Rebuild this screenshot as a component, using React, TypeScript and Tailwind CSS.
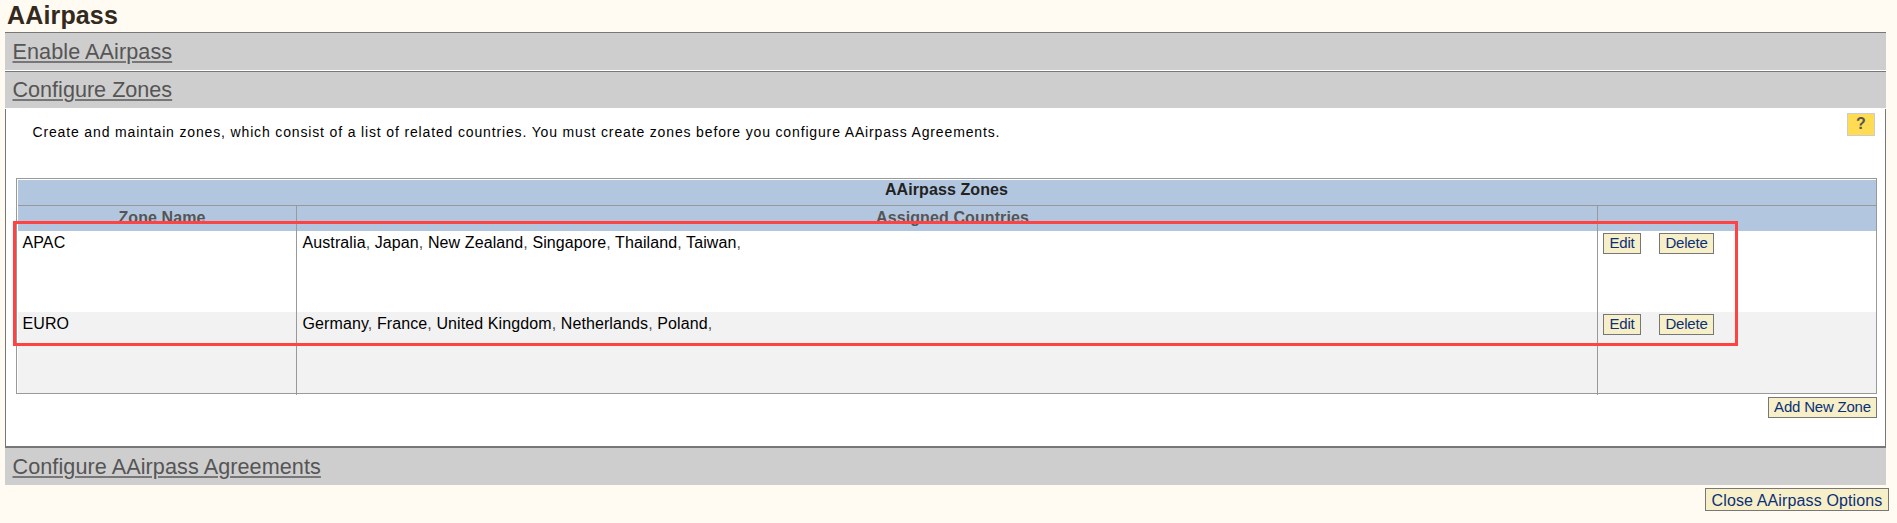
import { Fragment, type ReactNode } from "react";

const zones = [
  {
    name: "APAC",
    countries: ["Australia", "Japan", "New Zealand", "Singapore", "Thailand", "Taiwan"],
    row: "bg-white",
    cell: "h-[81px]",
  },
  {
    name: "EURO",
    countries: ["Germany", "France", "United Kingdom", "Netherlands", "Poland"],
    row: "bg-[#f2f2f2]",
    cell: "h-[83px]",
  },
];

function Button({ className, children }: { className: string; children: ReactNode }) {
  return (
    <button
      type="button"
      className={`block shrink-0 whitespace-nowrap border border-[#777] bg-[#f7efc8] text-center text-[#0b2f78] ${className}`}
    >
      {children}
    </button>
  );
}

function SectionBar({ title, className }: { title: string; className: string }) {
  return (
    <div className={`bg-[#cecece] pl-[7.5px] text-[21.6px] text-[#555] ${className}`}>
      <a href="#" className="underline decoration-[#777] decoration-2 underline-offset-[2px]">
        {title}
      </a>
    </div>
  );
}

export default function App() {
  return (
    <div className="h-[523px] w-full overflow-hidden bg-[#fffaf2] font-['Liberation_Sans',Arial,sans-serif] text-black">
      <div className="ml-[5px] w-[1881px]">
        <h1 className="h-8 pl-[2px] pt-px text-[25px] font-bold leading-[29px] tracking-[0.15px] text-[#33291c]">
          AAirpass
        </h1>
        <SectionBar title="Enable AAirpass" className="h-[38px] border-t border-[#777] leading-[37px] tracking-[0.08px]" />
        <div className="h-px bg-white" />
        <SectionBar title="Configure Zones" className="h-[37px] border-t border-[#777] leading-[36px]" />
        <div className="h-px bg-white" />

        <section className="h-[339px] border-x border-b-2 border-[#777] bg-white pl-[10px] pr-[8px]">
          <div className="flex h-[69px] justify-between">
            <p className="pl-[16.5px] pt-[15px] text-[14px] leading-4 tracking-[0.85px]">
              Create and maintain zones, which consist of a list of related countries. You must create zones before you
              configure AAirpass Agreements.
            </p>
            <div className="mr-[2px] mt-1 h-[23px] w-7 border border-[#ccc] bg-[#ffdc51] text-center text-base font-bold leading-[20px] text-[#555]">
              ?
            </div>
          </div>

          <div className="relative h-[216px] border border-[#999] pl-px pt-px">
            <div className="h-[25px] bg-[#b3c6e0] pr-px text-center text-base font-bold leading-5 tracking-[0.1px] text-[#222]">
              AAirpass Zones
            </div>
            <div className="grid h-[26px] grid-cols-[279px_1301px_1fr] border-t border-[#999] bg-[#b3c6e0] text-center text-base font-bold leading-[23px] tracking-[0.1px] text-[#555]">
              <div className="border-r border-[#999] pl-[10px]">Zone Name</div>
              <div className="border-r border-[#999] pl-[11px]">Assigned Countries</div>
              <div />
            </div>
            {zones.map((zone) => (
              <div
                key={zone.name}
                className={`grid h-[81px] grid-cols-[279px_1301px_1fr] text-base leading-6 tracking-[0.1px] ${zone.row}`}
              >
                <div className={`border-r border-[#999] pl-[4.5px] ${zone.cell}`}>{zone.name}</div>
                <div className={`border-r border-[#999] pl-[5.5px] ${zone.cell}`}>
                  {zone.countries.map((country) => (
                    <Fragment key={country}>
                      {country}
                      <span className="text-[#555]">, </span>
                    </Fragment>
                  ))}
                </div>
                <div className="flex gap-[18px] pl-[5px] pt-[2px]">
                  <Button className="h-[21px] w-[38px] pb-px text-[15px] leading-[18px] tracking-[-0.2px]">Edit</Button>
                  <Button className="h-[21px] w-[55px] pb-px text-[15px] leading-[18px] tracking-[-0.2px]">Delete</Button>
                </div>
              </div>
            ))}
            <div className="absolute -left-1 top-[42px] h-[125px] w-[1725px] border-3 border-[#ff4343]" />
          </div>

          <div className="flex justify-end pt-[3px]">
            <Button className="h-[21px] w-[109px] pb-px text-[15px] leading-[18px] tracking-[-0.2px]">
              Add New Zone
            </Button>
          </div>
        </section>

        <SectionBar title="Configure AAirpass Agreements" className="h-[37px] leading-[37px] tracking-[0.08px]" />
      </div>

      <div className="flex justify-end pr-2 pt-[3px]">
        <Button className="h-[23px] w-[184px] text-base leading-[23px] tracking-[0.13px]">Close AAirpass Options</Button>
      </div>
    </div>
  );
}
